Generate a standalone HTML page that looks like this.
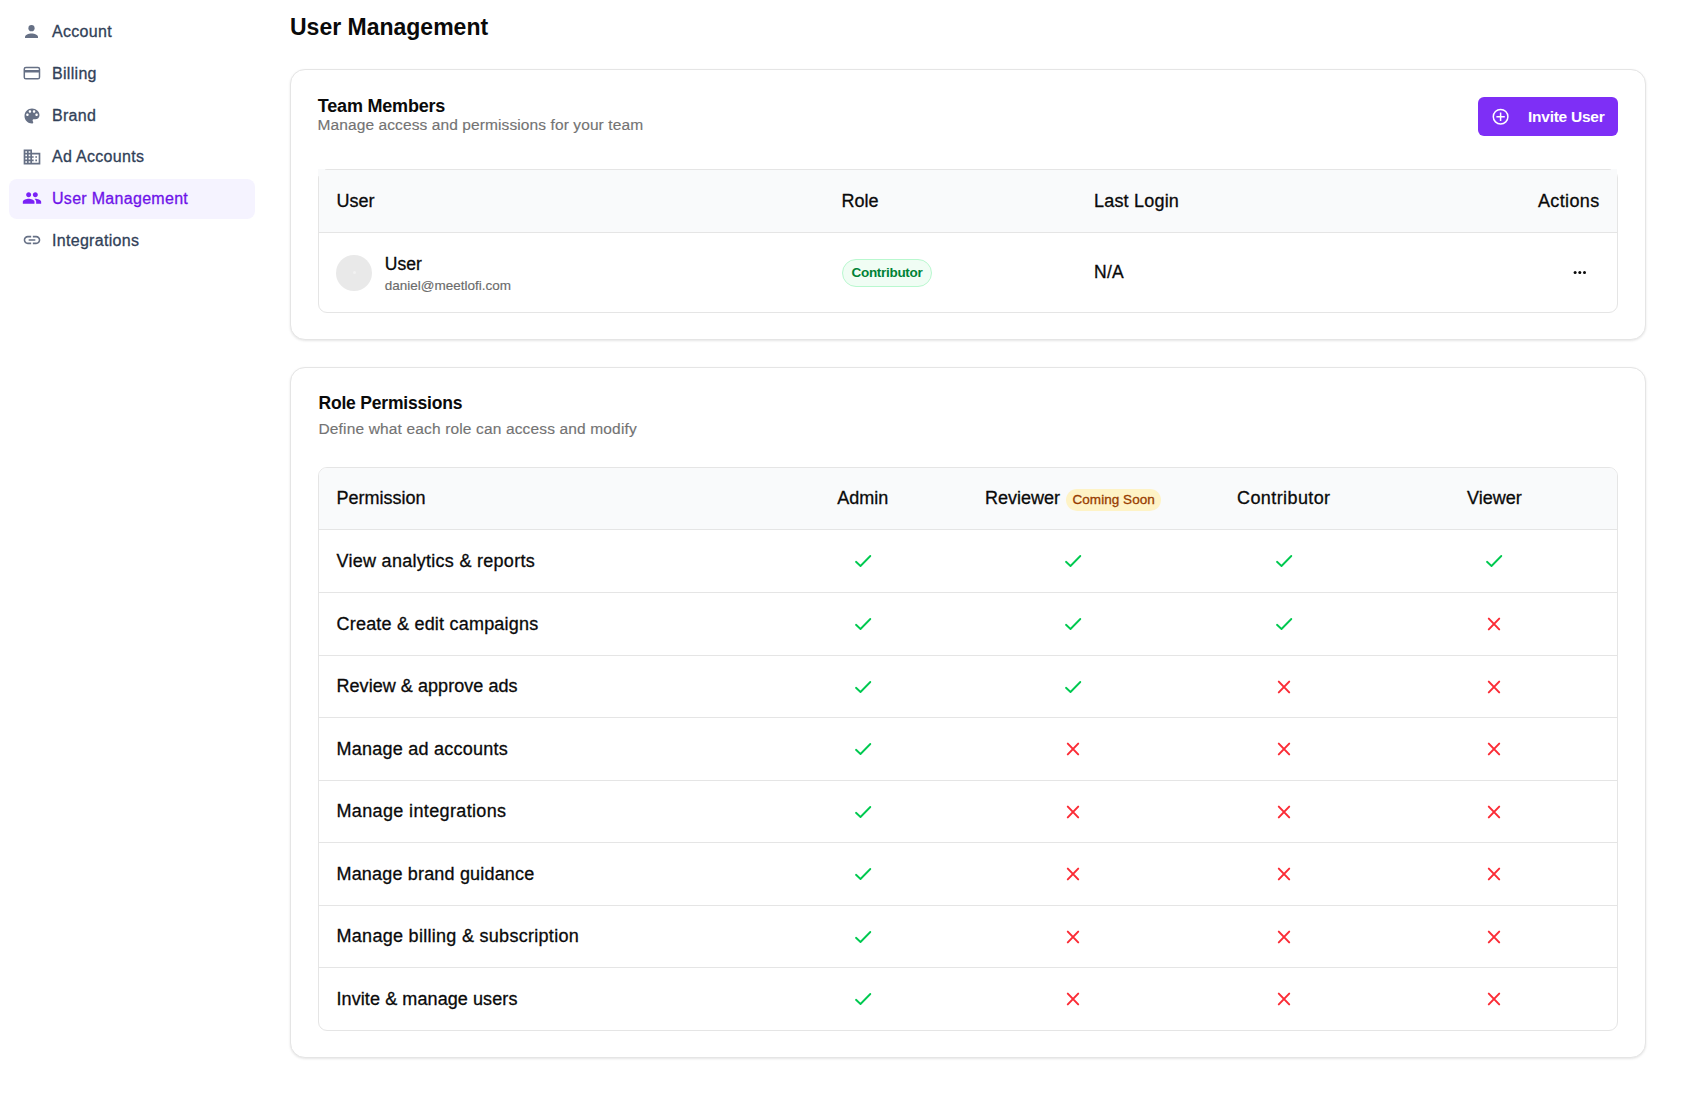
<!DOCTYPE html>
<html><head><meta charset="utf-8"><title>User Management</title>
<style>
*{box-sizing:border-box;margin:0;padding:0}
html,body{width:1707px;height:1103px;overflow:hidden;background:#ffffff}
body{position:relative;font-family:"Liberation Sans",sans-serif;}
.t{position:absolute;white-space:nowrap;line-height:1}
.abs{position:absolute}
.card{position:absolute;background:#fff;border:1px solid #e5e5e5;border-radius:15px;box-shadow:0 1px 3px rgba(0,0,0,0.07),0 1px 2px rgba(0,0,0,0.04)}
.tbl{position:absolute;border:1px solid #e5e5e5;border-radius:9px;overflow:hidden;background:#fff}
.hdr{position:absolute;left:0;right:0;top:0;background:#f9fafb;border-bottom:1px solid #e5e5e5}
.rowline{position:absolute;left:0;right:0;height:1px;background:#e5e5e5}
</style></head><body>
<div class="abs" style="left:22px;top:20.5px;width:20px;height:20px"><svg width="20" height="20" viewBox="0 0 20 20"><circle cx="9.5" cy="7.2" r="3.1" fill="#667085"/><path d="M3 17 V15.8 C3 13.8 6.5 12.4 9.5 12.4 C12.5 12.4 16 13.8 16 15.8 V17 Z" fill="#667085"/></svg></div>
<div class="t" style="left:52px;top:24px;font-size:16px;color:#314158;font-weight:400;letter-spacing:0.3px;-webkit-text-stroke:0.3px currentColor;">Account</div>
<div class="abs" style="left:22px;top:62.5px;width:20px;height:20px"><svg width="20" height="20" viewBox="0 0 20 20"><rect x="2.3" y="4.5" width="15.2" height="11.3" rx="1.6" fill="none" stroke="#667085" stroke-width="1.5"/><rect x="2.3" y="7" width="15.2" height="2.5" fill="#667085"/></svg></div>
<div class="t" style="left:52px;top:66px;font-size:16px;color:#314158;font-weight:400;letter-spacing:0.3px;-webkit-text-stroke:0.3px currentColor;">Billing</div>
<div class="abs" style="left:22px;top:105.5px;width:20px;height:20px"><svg width="20" height="20" viewBox="0 0 24 24"><path fill="#667085" d="M12 3c-4.97 0-9 4.03-9 9s4.03 9 9 9c.83 0 1.5-.67 1.5-1.5 0-.39-.15-.74-.39-1.01-.23-.26-.38-.61-.38-.99 0-.83.67-1.5 1.5-1.5H16c2.76 0 5-2.24 5-5 0-4.42-4.030-8-9-8zm-5.5 9c-.83 0-1.5-.67-1.5-1.5S5.67 9 6.5 9 8 9.67 8 10.5 7.33 12 6.5 12zm3-4C8.67 8 8 7.33 8 6.5S8.67 5 9.5 5s1.5.67 1.5 1.5S10.33 8 9.5 8zm5 0c-.83 0-1.5-.67-1.5-1.5S13.67 5 14.5 5s1.5.67 1.5 1.5S15.33 8 14.5 8zm3 4c-.83 0-1.5-.67-1.5-1.5S16.67 9 17.5 9s1.5.67 1.5 1.5-.67 1.5-1.5 1.5z"/></svg></div>
<div class="t" style="left:52px;top:108px;font-size:16px;color:#314158;font-weight:400;letter-spacing:0.3px;-webkit-text-stroke:0.3px currentColor;">Brand</div>
<div class="abs" style="left:22px;top:147.0px;width:20px;height:20px"><svg width="20" height="20" viewBox="0 0 24 24"><path fill="#667085" d="M12 7V3H2v18h20V7H12zM6 19H4v-2h2v2zm0-4H4v-2h2v2zm0-4H4V9h2v2zm0-4H4V5h2v2zm4 12H8v-2h2v2zm0-4H8v-2h2v2zm0-4H8V9h2v2zm0-4H8V5h2v2zm10 12h-8v-2h2v-2h-2v-2h2v-2h-2V9h8v10zm-2-8h-2v2h2v-2zm0 4h-2v2h2v-2z"/></svg></div>
<div class="t" style="left:52px;top:149px;font-size:16px;color:#314158;font-weight:400;letter-spacing:0.3px;-webkit-text-stroke:0.3px currentColor;">Ad Accounts</div>
<div class="abs" style="left:9px;top:179px;width:246px;height:40px;border-radius:8px;background:#f5f3ff"></div>
<div class="abs" style="left:22px;top:187.5px;width:20px;height:20px"><svg width="20" height="20" viewBox="0 0 24 24"><path fill="#7a22f6" d="M16 11c1.66 0 2.99-1.34 2.99-3S17.66 5 16 5c-1.66 0-3 1.34-3 3s1.34 3 3 3zm-8 0c1.66 0 2.99-1.34 2.99-3S9.66 5 8 5C6.34 5 5 6.34 5 8s1.34 3 3 3zm0 2c-2.33 0-7 1.17-7 3.5V19h14v-2.5c0-2.33-4.67-3.5-7-3.5zm8 0c-.29 0-.62.02-.97.05 1.16.84 1.970 1.97 1.97 3.45V19h6v-2.5c0-2.33-4.67-3.5-7-3.5z"/></svg></div>
<div class="t" style="left:52px;top:191px;font-size:16px;color:#6e12e9;font-weight:400;letter-spacing:0.3px;-webkit-text-stroke:0.3px currentColor;">User Management</div>
<div class="abs" style="left:22px;top:230.0px;width:20px;height:20px"><svg width="20" height="20" viewBox="0 0 24 24"><path fill="#667085" d="M3.9 12c0-1.71 1.39-3.1 3.1-3.1h4V7H7c-2.76 0-5 2.24-5 5s2.24 5 5 5h4v-1.9H7c-1.71 0-3.1-1.39-3.1-3.1zM8 13h8v-2H8v2zm9-6h-4v1.9h4c1.71 0 3.1 1.39 3.1 3.1s-1.39 3.1-3.1 3.1h-4V17h4c2.76 0 5-2.24 5-5s-2.24-5-5-5z"/></svg></div>
<div class="t" style="left:52px;top:233px;font-size:16px;color:#314158;font-weight:400;letter-spacing:0.3px;-webkit-text-stroke:0.3px currentColor;">Integrations</div>
<div class="t" style="left:290px;top:16px;font-size:23px;color:#0a0a0a;font-weight:700;">User Management</div>
<div class="card" style="left:290px;top:69px;width:1356px;height:271px"></div>
<div class="t" style="left:317.8px;top:97px;font-size:18px;color:#0a0a0a;font-weight:700;letter-spacing:-0.2px;">Team Members</div>
<div class="t" style="left:317.5px;top:117px;font-size:15.5px;color:#737373;font-weight:400;letter-spacing:0.1px;-webkit-text-stroke:0.15px currentColor;">Manage access and permissions for your team</div>
<div class="abs" style="left:1478px;top:97px;width:140px;height:39px;border-radius:6px;background:#7e2ff6"></div>
<svg class="abs" style="left:1490px;top:106px" width="21" height="21" viewBox="0 0 21 21"><circle cx="10.6" cy="10.7" r="7.3" fill="none" stroke="#fff" stroke-width="1.5"/><path d="M10.6 6.5v8.4M6.4 10.7h8.4" stroke="#fff" stroke-width="1.5" fill="none"/></svg>
<div class="t" style="left:1528px;top:109px;font-size:15.5px;color:#ffffff;font-weight:700;letter-spacing:-0.25px;">Invite User</div>
<div class="tbl" style="left:318px;top:169px;width:1300px;height:144px"><div class="hdr" style="height:63px"></div></div>
<div class="abs" style="left:318px;top:169px;width:7px;height:7px;background:#f9fafb"></div><div class="abs" style="left:1611px;top:169px;width:6px;height:7px;background:#f9fafb"></div>
<div class="t" style="left:336.5px;top:192px;font-size:18px;color:#0a0a0a;font-weight:400;-webkit-text-stroke:0.3px currentColor;">User</div>
<div class="t" style="left:841.5px;top:192px;font-size:18px;color:#0a0a0a;font-weight:400;-webkit-text-stroke:0.3px currentColor;">Role</div>
<div class="t" style="left:1094px;top:192px;font-size:18px;color:#0a0a0a;font-weight:400;letter-spacing:0.2px;-webkit-text-stroke:0.3px currentColor;">Last Login</div>
<div class="t" style="right:107.5px;text-align:right;top:192px;font-size:18px;color:#0a0a0a;font-weight:400;letter-spacing:0.35px;-webkit-text-stroke:0.3px currentColor;">Actions</div>
<div class="abs" style="left:336px;top:255px;width:36px;height:36px;border-radius:50%;background:#e9e9e9"></div>
<div class="abs" style="left:352.5px;top:271px;width:3px;height:3px;border-radius:50%;background:#f2f2f2"></div>
<div class="t" style="left:384.8px;top:256px;font-size:17.5px;color:#0a0a0a;font-weight:400;-webkit-text-stroke:0.3px currentColor;">User</div>
<div class="t" style="left:384.8px;top:279px;font-size:13.5px;color:#6b6b6b;font-weight:400;-webkit-text-stroke:0.15px currentColor;">daniel@meetlofi.com</div>
<div class="abs" style="left:842px;top:259px;width:90px;height:28px;border-radius:14px;background:#f0fdf4;border:1px solid #b9f8cf"></div>
<div class="t" style="left:851.5px;top:266px;font-size:13.5px;color:#008236;font-weight:700;letter-spacing:-0.3px;">Contributor</div>
<div class="t" style="left:1094px;top:264px;font-size:17.5px;color:#0a0a0a;font-weight:400;letter-spacing:0.3px;-webkit-text-stroke:0.3px currentColor;">N/A</div>
<svg class="abs" style="left:1572px;top:269px" width="16" height="7" viewBox="0 0 16 7"><circle cx="3.1" cy="3.4" r="1.5" fill="#0a0a0a"/><circle cx="7.8" cy="3.4" r="1.5" fill="#0a0a0a"/><circle cx="12.5" cy="3.4" r="1.5" fill="#0a0a0a"/></svg>
<div class="card" style="left:290px;top:367px;width:1356px;height:691px"></div>
<div class="t" style="left:318.5px;top:395px;font-size:17.5px;color:#0a0a0a;font-weight:700;letter-spacing:-0.2px;">Role Permissions</div>
<div class="t" style="left:318.5px;top:421px;font-size:15.5px;color:#737373;font-weight:400;letter-spacing:0.15px;-webkit-text-stroke:0.15px currentColor;">Define what each role can access and modify</div>
<div class="tbl" style="left:318px;top:467px;width:1300px;height:564px"><div class="hdr" style="height:62px"></div>
<div class="rowline" style="top:124px"></div>
<div class="rowline" style="top:187px"></div>
<div class="rowline" style="top:249px"></div>
<div class="rowline" style="top:312px"></div>
<div class="rowline" style="top:374px"></div>
<div class="rowline" style="top:437px"></div>
<div class="rowline" style="top:499px"></div>
</div>
<div class="t" style="left:336.5px;top:489px;font-size:18px;color:#0a0a0a;font-weight:400;-webkit-text-stroke:0.3px currentColor;">Permission</div>
<div class="t" style="left:662.7px;width:400px;text-align:center;top:489px;font-size:18px;color:#0a0a0a;font-weight:400;-webkit-text-stroke:0.3px currentColor;">Admin</div>
<div class="t" style="left:985px;top:489px;font-size:18px;color:#0a0a0a;font-weight:400;-webkit-text-stroke:0.3px currentColor;">Reviewer</div>
<div class="abs" style="left:1066px;top:489px;width:95px;height:22px;border-radius:11px;background:#fef3c6"></div>
<div class="t" style="left:1072.5px;top:493px;font-size:13.5px;color:#973c00;font-weight:400;letter-spacing:0.05px;-webkit-text-stroke:0.3px currentColor;">Coming Soon</div>
<div class="t" style="left:1083.8px;width:400px;text-align:center;top:489px;font-size:18px;color:#0a0a0a;font-weight:400;letter-spacing:0.4px;-webkit-text-stroke:0.3px currentColor;">Contributor</div>
<div class="t" style="left:1294.4px;width:400px;text-align:center;top:489px;font-size:18px;color:#0a0a0a;font-weight:400;-webkit-text-stroke:0.3px currentColor;">Viewer</div>
<div class="t" style="left:336.5px;top:552px;font-size:18px;color:#0a0a0a;font-weight:400;letter-spacing:0.28px;-webkit-text-stroke:0.3px currentColor;">View analytics &amp; reports</div>
<svg class="abs" style="left:852.70px;top:551.30px" width="20" height="20" viewBox="0 0 20 20"><path d="M3 10.8 7.5 15 17.3 5" fill="none" stroke="#00c950" stroke-width="1.85" stroke-linecap="round" stroke-linejoin="round"/></svg>
<svg class="abs" style="left:1063.00px;top:551.30px" width="20" height="20" viewBox="0 0 20 20"><path d="M3 10.8 7.5 15 17.3 5" fill="none" stroke="#00c950" stroke-width="1.85" stroke-linecap="round" stroke-linejoin="round"/></svg>
<svg class="abs" style="left:1273.80px;top:551.30px" width="20" height="20" viewBox="0 0 20 20"><path d="M3 10.8 7.5 15 17.3 5" fill="none" stroke="#00c950" stroke-width="1.85" stroke-linecap="round" stroke-linejoin="round"/></svg>
<svg class="abs" style="left:1484.40px;top:551.30px" width="20" height="20" viewBox="0 0 20 20"><path d="M3 10.8 7.5 15 17.3 5" fill="none" stroke="#00c950" stroke-width="1.85" stroke-linecap="round" stroke-linejoin="round"/></svg>
<div class="t" style="left:336.5px;top:615px;font-size:18px;color:#0a0a0a;font-weight:400;letter-spacing:0.21px;-webkit-text-stroke:0.3px currentColor;">Create &amp; edit campaigns</div>
<svg class="abs" style="left:852.70px;top:614.30px" width="20" height="20" viewBox="0 0 20 20"><path d="M3 10.8 7.5 15 17.3 5" fill="none" stroke="#00c950" stroke-width="1.85" stroke-linecap="round" stroke-linejoin="round"/></svg>
<svg class="abs" style="left:1063.00px;top:614.30px" width="20" height="20" viewBox="0 0 20 20"><path d="M3 10.8 7.5 15 17.3 5" fill="none" stroke="#00c950" stroke-width="1.85" stroke-linecap="round" stroke-linejoin="round"/></svg>
<svg class="abs" style="left:1273.80px;top:614.30px" width="20" height="20" viewBox="0 0 20 20"><path d="M3 10.8 7.5 15 17.3 5" fill="none" stroke="#00c950" stroke-width="1.85" stroke-linecap="round" stroke-linejoin="round"/></svg>
<svg class="abs" style="left:1484.40px;top:614.00px" width="20" height="20" viewBox="0 0 20 20"><path d="M4.8 4.6 15.2 15.4M15.2 4.6 4.8 15.4" fill="none" stroke="#fb2c36" stroke-width="2" stroke-linecap="round"/></svg>
<div class="t" style="left:336.5px;top:677px;font-size:18px;color:#0a0a0a;font-weight:400;letter-spacing:0.05px;-webkit-text-stroke:0.3px currentColor;">Review &amp; approve ads</div>
<svg class="abs" style="left:852.70px;top:676.80px" width="20" height="20" viewBox="0 0 20 20"><path d="M3 10.8 7.5 15 17.3 5" fill="none" stroke="#00c950" stroke-width="1.85" stroke-linecap="round" stroke-linejoin="round"/></svg>
<svg class="abs" style="left:1063.00px;top:676.80px" width="20" height="20" viewBox="0 0 20 20"><path d="M3 10.8 7.5 15 17.3 5" fill="none" stroke="#00c950" stroke-width="1.85" stroke-linecap="round" stroke-linejoin="round"/></svg>
<svg class="abs" style="left:1273.80px;top:676.50px" width="20" height="20" viewBox="0 0 20 20"><path d="M4.8 4.6 15.2 15.4M15.2 4.6 4.8 15.4" fill="none" stroke="#fb2c36" stroke-width="2" stroke-linecap="round"/></svg>
<svg class="abs" style="left:1484.40px;top:676.50px" width="20" height="20" viewBox="0 0 20 20"><path d="M4.8 4.6 15.2 15.4M15.2 4.6 4.8 15.4" fill="none" stroke="#fb2c36" stroke-width="2" stroke-linecap="round"/></svg>
<div class="t" style="left:336.5px;top:740px;font-size:18px;color:#0a0a0a;font-weight:400;letter-spacing:0.25px;-webkit-text-stroke:0.3px currentColor;">Manage ad accounts</div>
<svg class="abs" style="left:852.70px;top:739.30px" width="20" height="20" viewBox="0 0 20 20"><path d="M3 10.8 7.5 15 17.3 5" fill="none" stroke="#00c950" stroke-width="1.85" stroke-linecap="round" stroke-linejoin="round"/></svg>
<svg class="abs" style="left:1063.00px;top:739.00px" width="20" height="20" viewBox="0 0 20 20"><path d="M4.8 4.6 15.2 15.4M15.2 4.6 4.8 15.4" fill="none" stroke="#fb2c36" stroke-width="2" stroke-linecap="round"/></svg>
<svg class="abs" style="left:1273.80px;top:739.00px" width="20" height="20" viewBox="0 0 20 20"><path d="M4.8 4.6 15.2 15.4M15.2 4.6 4.8 15.4" fill="none" stroke="#fb2c36" stroke-width="2" stroke-linecap="round"/></svg>
<svg class="abs" style="left:1484.40px;top:739.00px" width="20" height="20" viewBox="0 0 20 20"><path d="M4.8 4.6 15.2 15.4M15.2 4.6 4.8 15.4" fill="none" stroke="#fb2c36" stroke-width="2" stroke-linecap="round"/></svg>
<div class="t" style="left:336.5px;top:802px;font-size:18px;color:#0a0a0a;font-weight:400;letter-spacing:0.36px;-webkit-text-stroke:0.3px currentColor;">Manage integrations</div>
<svg class="abs" style="left:852.70px;top:801.80px" width="20" height="20" viewBox="0 0 20 20"><path d="M3 10.8 7.5 15 17.3 5" fill="none" stroke="#00c950" stroke-width="1.85" stroke-linecap="round" stroke-linejoin="round"/></svg>
<svg class="abs" style="left:1063.00px;top:801.50px" width="20" height="20" viewBox="0 0 20 20"><path d="M4.8 4.6 15.2 15.4M15.2 4.6 4.8 15.4" fill="none" stroke="#fb2c36" stroke-width="2" stroke-linecap="round"/></svg>
<svg class="abs" style="left:1273.80px;top:801.50px" width="20" height="20" viewBox="0 0 20 20"><path d="M4.8 4.6 15.2 15.4M15.2 4.6 4.8 15.4" fill="none" stroke="#fb2c36" stroke-width="2" stroke-linecap="round"/></svg>
<svg class="abs" style="left:1484.40px;top:801.50px" width="20" height="20" viewBox="0 0 20 20"><path d="M4.8 4.6 15.2 15.4M15.2 4.6 4.8 15.4" fill="none" stroke="#fb2c36" stroke-width="2" stroke-linecap="round"/></svg>
<div class="t" style="left:336.5px;top:865px;font-size:18px;color:#0a0a0a;font-weight:400;letter-spacing:0.18px;-webkit-text-stroke:0.3px currentColor;">Manage brand guidance</div>
<svg class="abs" style="left:852.70px;top:864.30px" width="20" height="20" viewBox="0 0 20 20"><path d="M3 10.8 7.5 15 17.3 5" fill="none" stroke="#00c950" stroke-width="1.85" stroke-linecap="round" stroke-linejoin="round"/></svg>
<svg class="abs" style="left:1063.00px;top:864.00px" width="20" height="20" viewBox="0 0 20 20"><path d="M4.8 4.6 15.2 15.4M15.2 4.6 4.8 15.4" fill="none" stroke="#fb2c36" stroke-width="2" stroke-linecap="round"/></svg>
<svg class="abs" style="left:1273.80px;top:864.00px" width="20" height="20" viewBox="0 0 20 20"><path d="M4.8 4.6 15.2 15.4M15.2 4.6 4.8 15.4" fill="none" stroke="#fb2c36" stroke-width="2" stroke-linecap="round"/></svg>
<svg class="abs" style="left:1484.40px;top:864.00px" width="20" height="20" viewBox="0 0 20 20"><path d="M4.8 4.6 15.2 15.4M15.2 4.6 4.8 15.4" fill="none" stroke="#fb2c36" stroke-width="2" stroke-linecap="round"/></svg>
<div class="t" style="left:336.5px;top:927px;font-size:18px;color:#0a0a0a;font-weight:400;letter-spacing:0.29px;-webkit-text-stroke:0.3px currentColor;">Manage billing &amp; subscription</div>
<svg class="abs" style="left:852.70px;top:926.80px" width="20" height="20" viewBox="0 0 20 20"><path d="M3 10.8 7.5 15 17.3 5" fill="none" stroke="#00c950" stroke-width="1.85" stroke-linecap="round" stroke-linejoin="round"/></svg>
<svg class="abs" style="left:1063.00px;top:926.50px" width="20" height="20" viewBox="0 0 20 20"><path d="M4.8 4.6 15.2 15.4M15.2 4.6 4.8 15.4" fill="none" stroke="#fb2c36" stroke-width="2" stroke-linecap="round"/></svg>
<svg class="abs" style="left:1273.80px;top:926.50px" width="20" height="20" viewBox="0 0 20 20"><path d="M4.8 4.6 15.2 15.4M15.2 4.6 4.8 15.4" fill="none" stroke="#fb2c36" stroke-width="2" stroke-linecap="round"/></svg>
<svg class="abs" style="left:1484.40px;top:926.50px" width="20" height="20" viewBox="0 0 20 20"><path d="M4.8 4.6 15.2 15.4M15.2 4.6 4.8 15.4" fill="none" stroke="#fb2c36" stroke-width="2" stroke-linecap="round"/></svg>
<div class="t" style="left:336.5px;top:990px;font-size:18px;color:#0a0a0a;font-weight:400;letter-spacing:0.09px;-webkit-text-stroke:0.3px currentColor;">Invite &amp; manage users</div>
<svg class="abs" style="left:852.70px;top:989.30px" width="20" height="20" viewBox="0 0 20 20"><path d="M3 10.8 7.5 15 17.3 5" fill="none" stroke="#00c950" stroke-width="1.85" stroke-linecap="round" stroke-linejoin="round"/></svg>
<svg class="abs" style="left:1063.00px;top:989.00px" width="20" height="20" viewBox="0 0 20 20"><path d="M4.8 4.6 15.2 15.4M15.2 4.6 4.8 15.4" fill="none" stroke="#fb2c36" stroke-width="2" stroke-linecap="round"/></svg>
<svg class="abs" style="left:1273.80px;top:989.00px" width="20" height="20" viewBox="0 0 20 20"><path d="M4.8 4.6 15.2 15.4M15.2 4.6 4.8 15.4" fill="none" stroke="#fb2c36" stroke-width="2" stroke-linecap="round"/></svg>
<svg class="abs" style="left:1484.40px;top:989.00px" width="20" height="20" viewBox="0 0 20 20"><path d="M4.8 4.6 15.2 15.4M15.2 4.6 4.8 15.4" fill="none" stroke="#fb2c36" stroke-width="2" stroke-linecap="round"/></svg>
</body></html>
